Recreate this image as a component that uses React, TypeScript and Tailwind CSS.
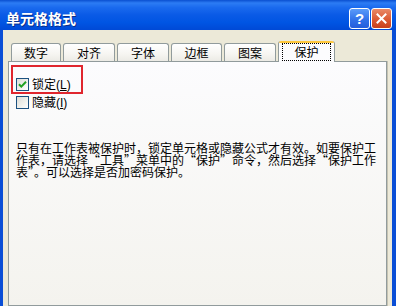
import React from "react";

const tabs = [
  { label: "数字", w: "w-[50px]" },
  { label: "对齐", w: "w-[52px]" },
  { label: "字体", w: "w-[52px]" },
  { label: "边框", w: "w-[51px]" },
  { label: "图案", w: "w-[52px]" },
];

const lines = [
  "只有在工作表被保护时，锁定单元格或隐藏公式才有效。如要保护工",
  "作表，请选择“工具”菜单中的“保护”命令，然后选择“保护工作",
  "表”。可以选择是否加密码保护。",
];

function Checkbox({ checked }: { checked?: boolean }) {
  return (
    <span className="w-[13px] h-[13px] shrink-0 border border-[#1C5180] bg-[linear-gradient(135deg,#DCDCD7_0%,#F2F2EE_60%,#FFFFFF_100%)] flex items-center justify-center">
      {checked && (
        <svg width="9" height="9" viewBox="0 0 9 9">
          <path d="M1 4.2 L3.3 6.6 L8 1.8" fill="none" stroke="#21A121" strokeWidth="2" />
        </svg>
      )}
    </span>
  );
}

export default function App() {
  return (
    <div className="w-[396px] h-[306px] flex flex-col overflow-hidden font-['Noto_Sans_CJK_SC',sans-serif] text-[12px] text-black">
      {/* title bar */}
      <div className="h-[30px] shrink-0 flex items-start pl-[6px] pr-[4px] bg-[linear-gradient(180deg,#0A4FD0_0%,#2C7CF4_10%,#1A6AEE_25%,#0A5AE6_50%,#0055E3_75%,#0049D6_100%)]">
        <span className="mt-[10px] text-white font-bold text-[14px] leading-[16px] [text-shadow:1px_1px_0_#0A2F8C]">
          单元格格式
        </span>
        <div className="ml-auto mt-[8px] flex gap-[1px]">
          <div className="w-[21px] h-[21px] rounded-[3px] border border-white bg-[linear-gradient(180deg,#5A9BFA_0%,#2F6FE8_60%,#245DDB_100%)] flex items-center justify-center text-white font-bold text-[15px] leading-none font-['Liberation_Sans',sans-serif]">
            ?
          </div>
          <div className="w-[21px] h-[21px] rounded-[3px] border border-white bg-[linear-gradient(180deg,#E98A68_0%,#DC5A34_55%,#C8401C_100%)] flex items-center justify-center">
            <svg width="11" height="11" viewBox="0 0 11 11">
              <path d="M1.5 1.5 L9.5 9.5 M9.5 1.5 L1.5 9.5" stroke="white" strokeWidth="2" strokeLinecap="square" />
            </svg>
          </div>
        </div>
      </div>

      {/* body */}
      <div className="flex-1 flex flex-col bg-[#ECE9D8] border-l-[3px] border-r-[4px] border-[#0A4ED6] px-[5px] pt-[11px]">
        <div className="h-[20px] flex items-end pl-[3px] gap-[2px] relative z-10">
          {tabs.map((t) => (
            <div
              key={t.label}
              className={`${t.w} h-[18px] border border-b-0 border-[#919B9C] rounded-t-[3px] bg-[linear-gradient(180deg,#FFFFFF_0%,#F6F5F1_60%,#ECEBE5_100%)] flex items-center justify-center leading-none`}
            >
              {t.label}
            </div>
          ))}
          <div className="w-[57px] h-[21px] -mb-px flex flex-col rounded-t-[3px] border-x border-[#919B9C] bg-[#FCFCFE] overflow-hidden">
            <div className="h-[2px] bg-[#FFC83C] shrink-0" />
            <div className="flex-1 flex px-[3px] pb-[1px]">
              <span className="flex-1 border border-dotted border-black flex items-center justify-center leading-none">
                保护
              </span>
            </div>
          </div>
        </div>

        {/* panel */}
        <div className="flex-1 relative border border-[#919B9C] bg-[linear-gradient(180deg,#FCFCFE_0%,#F4F3EE_100%)] shadow-[1px_0_0_#C5C2B2] pl-[7px] pt-[16px] flex flex-col">
          <div className="flex flex-col gap-[5px]">
            <label className="flex items-center gap-[3px] h-[13px] leading-none">
              <Checkbox checked />
              <span>
                锁定<span className="font-['Liberation_Sans',sans-serif]">(<span className="underline">L</span>)</span>
              </span>
            </label>
            <label className="flex items-center gap-[3px] h-[13px] leading-none">
              <Checkbox />
              <span>
                隐藏<span className="font-['Liberation_Sans',sans-serif]">(<span className="underline">I</span>)</span>
              </span>
            </label>
          </div>

          <div className="mt-[33px] flex flex-col whitespace-nowrap [font-feature-settings:'fwid']">
            {lines.map((l) => (
              <p key={l} className="h-[12px] leading-[12px]">
                {l}
              </p>
            ))}
          </div>

          {/* red highlight annotation */}
          <div className="absolute left-[2px] top-[3px] w-[72px] h-[29px] border-2 border-[#E0262E]" />
        </div>
      </div>
    </div>
  );
}
